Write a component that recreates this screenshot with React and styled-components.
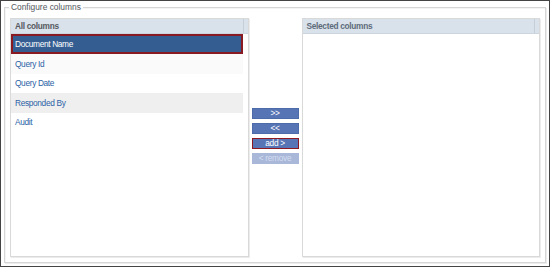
import * as React from "react";
import styled, {createGlobalStyle} from 'styled-components';

const GlobalStyles = createGlobalStyle`
  html, body {
    margin: 0;
    padding: 0;
    background: #ffffff;
  }
  body {
    font-family: "Liberation Sans", Arial, sans-serif;
  }
  * {
    box-sizing: border-box;
  }
`;

const Frame = styled.div`
  height: 100vh;
  border: 1px solid #444444;
  display: flex;
  flex-direction: column;
  background: #ffffff;
`;

const FieldSet = styled.fieldset`
  flex: 1;
  min-height: 0;
  margin: 0 3px 3px 3px;
  padding: 5px 5px 5px 5px;
  border: 1px solid #d6d6d6;
  box-shadow: 1px 1px 0 #ececec, inset 1px 1px 0 #f4f4f4;
  display: grid;
  grid-template-columns: 1fr 53px 1fr;
`;

const Legend = styled.legend`
  font-size: 8.4px;
  line-height: 12px;
  color: #555a60;
  padding: 0 2px;
  margin-left: -1px;
`;

const Panel = styled.div`
  display: flex;
  flex-direction: column;
  border: 1px solid #d9d9d9;
  box-shadow: 1px 1px 0 #ececec;
  background: #ffffff;
  min-height: 0;
`;

const PanelHeader = styled.div`
  display: flex;
  height: 15px;
  background: #d9e1ea;
  border-bottom: 1px solid #cdd5de;
`;

const HeaderTitle = styled.div`
  flex: 1;
  display: flex;
  align-items: center;
  padding-left: 4px;
  font-size: 8.3px;
  letter-spacing: -0.3px;
  font-weight: bold;
  color: ${({$muted}) => ($muted ? '#5d6b7a' : '#565a5f')};
`;

const HeaderGutter = styled.div`
  width: 5px;
  border-left: 1px solid #c6ced8;
`;

const PanelBody = styled.div`
  flex: 1;
  padding-right: 5px;
`;

const Row = styled.div`
  height: ${({$selected}) => ($selected ? '20px' : '19.5px')};
  display: flex;
  align-items: center;
  padding-left: ${({$selected}) => ($selected ? '2px' : '4px')};
  font-size: 8.3px;
  letter-spacing: -0.33px;
  color: ${({$selected}) => ($selected ? '#ffffff' : '#2b62a6')};
  background: ${({$selected, $shade}) =>
    $selected ? '#345e91' : $shade || '#ffffff'};
  border: ${({$selected}) => ($selected ? '2px solid #8a1a21' : 'none')};
`;

const ButtonColumn = styled.div`
  display: flex;
  flex-direction: column;
  align-items: center;
  justify-content: center;
  gap: 4px;
  padding-bottom: 3px;
`;

const MoveButton = styled.button`
  width: 47px;
  height: 11px;
  padding: 0;
  margin: 0;
  font-family: "Liberation Sans", Arial, sans-serif;
  font-size: 8.3px;
  letter-spacing: -0.3px;
  line-height: 9px;
  color: ${({disabled}) => (disabled ? '#d3dcef' : '#ffffff')};
  background: ${({disabled}) => (disabled ? '#a9b8d9' : '#5775b4')};
  border: 1px solid ${({$active, disabled}) =>
    $active ? '#8d1a22' : disabled ? '#a9b8d9' : '#4e6ba9'};
  cursor: ${({disabled}) => (disabled ? 'default' : 'pointer')};
`;

const allColumns = [
    {name: 'Document Name', selected: true},
    {name: 'Query Id', shade: '#fafafa'},
    {name: 'Query Date'},
    {name: 'Responded By', shade: '#efefef'},
    {name: 'Audit'},
];

const App = () => {
    return (
        <>
            <GlobalStyles/>
            <Frame>
                <FieldSet>
                    <Legend>Configure columns</Legend>
                    <Panel>
                        <PanelHeader>
                            <HeaderTitle>All columns</HeaderTitle>
                            <HeaderGutter/>
                        </PanelHeader>
                        <PanelBody>
                            {allColumns.map((col) => (
                                <Row key={col.name} $selected={col.selected} $shade={col.shade}>
                                    {col.name}
                                </Row>
                            ))}
                        </PanelBody>
                    </Panel>
                    <ButtonColumn>
                        <MoveButton>&gt;&gt;</MoveButton>
                        <MoveButton>&lt;&lt;</MoveButton>
                        <MoveButton $active>add &gt;</MoveButton>
                        <MoveButton disabled>&lt; remove</MoveButton>
                    </ButtonColumn>
                    <Panel>
                        <PanelHeader>
                            <HeaderTitle $muted>Selected columns</HeaderTitle>
                            <HeaderGutter/>
                        </PanelHeader>
                        <PanelBody/>
                    </Panel>
                </FieldSet>
            </Frame>
        </>
    );
};

export default App;
